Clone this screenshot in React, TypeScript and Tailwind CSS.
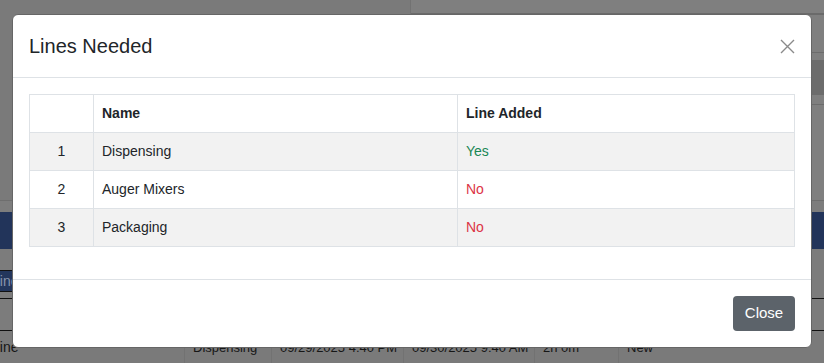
import React from 'react';

type Line = { id: number; name: string; added: boolean };

const lines: Line[] = [
    { id: 1, name: 'Dispensing', added: true },
    { id: 2, name: 'Auger Mixers', added: false },
    { id: 3, name: 'Packaging', added: false },
];

function CloseIcon() {
    return (
        <svg width="15" height="15" viewBox="0 0 15 15" fill="none">
            <path d="M1 1L14 14M14 1L1 14" stroke="#8a8a8a" strokeWidth="1.4" />
        </svg>
    );
}

// dimmed page that sits under the modal backdrop
function BackgroundPage() {
    return (
        <div className="flex h-full flex-col">
            <div className="flex h-[200px] shrink-0">
                <div className="w-[410px] bg-[#7a7a7a]" />
                <div className="flex flex-1 flex-col border-l border-[#727272] bg-[#7f7f7f] pt-[13px]">
                    <div className="flex h-[39px] border-t-2 border-[#6a6a6a]">
                        <div className="w-[163px] border-r border-[#747474]" />
                        <div className="w-[160px] border-r border-[#747474]" />
                        <div className="flex-1" />
                    </div>
                    <div className="h-[8px] border-t border-[#6c6c6c]" />
                    <div className="h-[35px] bg-[#6c6c6c]" />
                    <div className="h-[9px]" />
                    <div className="flex-1 border-t border-[#6c6c6c]" />
                </div>
            </div>
            <div className="h-[12px] shrink-0 border-t border-[#6e6e6e] bg-[#7d7d7d]" />
            <div className="h-[37px] shrink-0 bg-[#22345a]" />
            <div className="flex h-[49px] shrink-0 flex-col bg-[#7c7c7c] pt-[21px]">
                <div className="flex h-[22px] w-[13px] items-center overflow-hidden border-y border-[#111] bg-[#23365c] text-[14px] text-[#8794ab]">
                    <span className="-ml-[8px]">Line</span>
                </div>
            </div>
            <div className="h-[32px] shrink-0 border-t border-[#111] bg-[#7c7c7c]" />
            <div className="flex flex-1 overflow-hidden whitespace-nowrap border-t border-[#111] bg-[#7a7a7a] text-[13px] leading-[21px] text-[#161616]">
                <div className="w-[184px] shrink-0 overflow-hidden pt-[6px] text-[14px]">
                    <span className="-ml-[8px] block">Line</span>
                </div>
                <div className="w-[87px] shrink-0 overflow-hidden border-l border-[#727272] pl-2 pt-[6px]">Dispensing</div>
                <div className="w-[132px] shrink-0 overflow-hidden border-l border-[#727272] pl-2 pt-[6px]">09/29/2025 4:40 PM</div>
                <div className="w-[131px] shrink-0 overflow-hidden border-l border-[#727272] pl-2 pt-[6px]">09/30/2025 9:40 AM</div>
                <div className="w-[84px] shrink-0 overflow-hidden border-l border-[#727272] pl-2 pt-[6px]">2h 0m</div>
                <div className="flex-1 border-l border-[#727272] pl-2 pt-[6px]">New</div>
            </div>
        </div>
    );
}

export default function App() {
    return (
        <div className="relative h-[363px] w-[824px] overflow-hidden bg-[#7b7b7b] font-['Liberation_Sans',Arial,sans-serif] text-[#212529]">
            <BackgroundPage />

            {/* Modal */}
            <div className="absolute left-[12px] top-[14px] w-[800px] rounded-[6px] border border-[#666] bg-white">
                <div className="flex items-center justify-between border-b border-[#dee2e6] px-4 py-4">
                    <h5 className="text-[20px] leading-[30px] font-normal text-[#212529]">Lines Needed</h5>
                    <button className="flex h-[30px] w-[15px] items-center justify-center">
                        <CloseIcon />
                    </button>
                </div>

                <div className="px-4 pt-4 pb-4">
                    <table className="mb-4 w-full table-fixed border-collapse border border-[#dee2e6] text-[14px] leading-[21px]">
                        <colgroup>
                            <col className="w-[64px]" />
                            <col className="w-[364px]" />
                            <col />
                        </colgroup>
                        <thead>
                            <tr className="bg-white">
                                <th className="border border-[#dee2e6] px-2 py-2"></th>
                                <th className="border border-[#dee2e6] px-2 py-2 text-left font-bold">Name</th>
                                <th className="border border-[#dee2e6] px-2 py-2 text-left font-bold">Line Added</th>
                            </tr>
                        </thead>
                        <tbody>
                            {lines.map((line, i) => (
                                <tr key={line.id} className={i % 2 === 0 ? 'bg-[#f2f2f2]' : 'bg-white'}>
                                    <td className="border border-[#dee2e6] px-2 py-2 text-center">{line.id}</td>
                                    <td className="border border-[#dee2e6] px-2 py-2">{line.name}</td>
                                    <td className={`border border-[#dee2e6] px-2 py-2 ${line.added ? 'text-[#198754]' : 'text-[#dc3545]'}`}>
                                        {line.added ? 'Yes' : 'No'}
                                    </td>
                                </tr>
                            ))}
                        </tbody>
                    </table>
                </div>

                <div className="flex justify-end border-t border-[#dee2e6] p-3">
                    <button className="m-1 h-[35px] w-[62px] rounded-[4px] bg-[#5c636a] text-[15px] text-white">
                        Close
                    </button>
                </div>
            </div>
        </div>
    );
}
